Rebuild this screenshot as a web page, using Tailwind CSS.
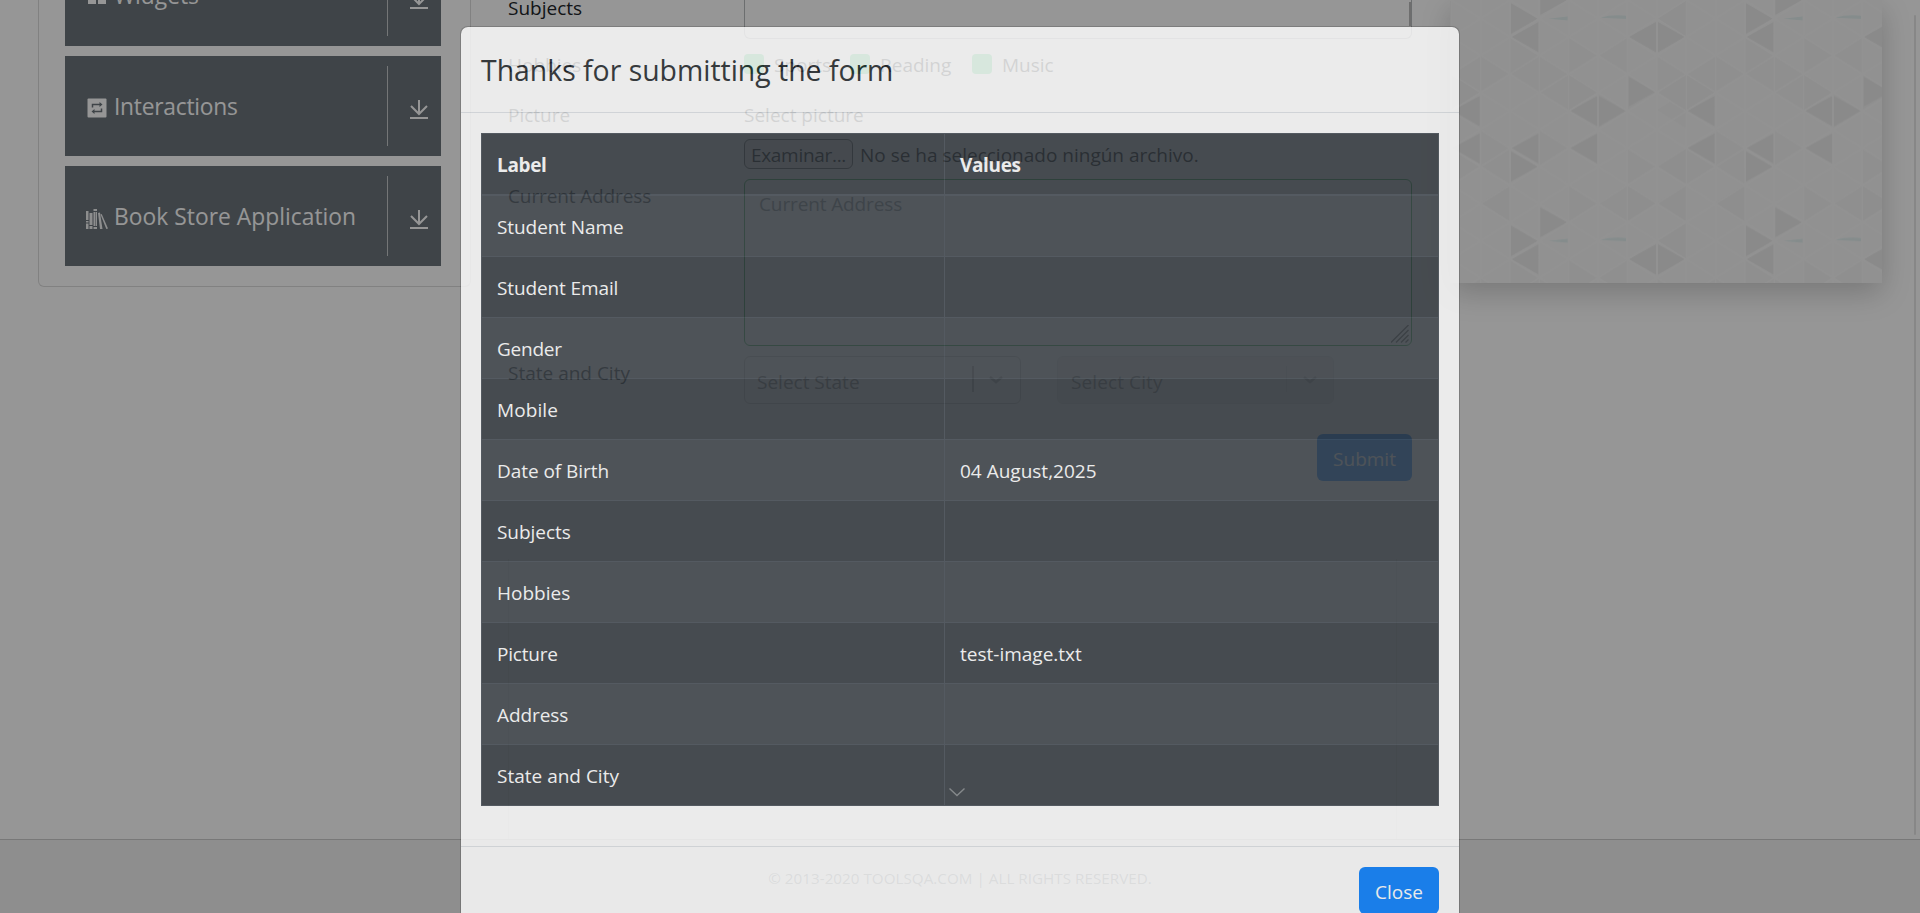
<!DOCTYPE html>
<html lang="en">
<head>
<meta charset="utf-8">
<title>Practice Form</title>
<script src="https://cdn.jsdelivr.net/npm/@tailwindcss/browser@4"></script>
</head>
<body class="bg-white">
<div class="relative h-[913px] w-full overflow-hidden bg-white font-['Open_Sans',sans-serif] text-[19px] leading-[30px] text-[#212529]">

  <div class="flex h-[839px] items-start">
    <!-- Side menu -->
    <nav class="ml-[38px] flex h-[287px] w-[433px] shrink-0 flex-col justify-end gap-2.5 rounded-b-md border-x border-b border-[#dcdcdc] pr-[29px] pl-[26px] pb-5 text-[22.8px] text-white">
      <div class="flex h-[100px] shrink-0 items-center bg-[#6b747b]">
        <svg class="ml-[22px] h-5 w-5 shrink-0" viewBox="0 0 20 20" fill="currentColor"><path d="M1 0h8v8H1zM11 0h8v8h-8zM1 10h8v8H1zM11 10h8v8h-8z"/></svg>
        <span class="ml-[7px] flex-1">Widgets</span>
        <div class="h-20 w-px bg-[#c6c9cb]"></div>
        <svg class="mr-[11px] ml-5 mt-[7px] h-[22px] w-[22px]" viewBox="0 0 22 22" fill="none" stroke="currentColor" stroke-width="2"><path d="M11 1v14M3 7l8 8 8-8M2 19h18"/></svg>
      </div>
      <div class="flex h-[100px] shrink-0 items-center bg-[#6b747b]">
        <svg class="ml-[22px] mt-1 h-5 w-5 shrink-0" viewBox="0 0 20 20"><rect x="0.500" y="0.500" width="19" height="19" rx="1" fill="#fff"/><path d="M5.500 9.500V6.500h7.500M14.500 10.500v3H7" fill="none" stroke="#6b747b" stroke-width="1.500"/><path d="M12.500 4l3 2.500-3 2.500zM7.500 11l-3 2.500 3 2.500z" fill="#6b747b"/></svg>
        <span class="mt-0.5 ml-[7px] flex-1 tracking-[-0.25px]">Interactions</span>
        <div class="h-20 w-px bg-[#c6c9cb]"></div>
        <svg class="mr-[11px] ml-5 mt-[7px] h-[22px] w-[22px]" viewBox="0 0 22 22" fill="none" stroke="currentColor" stroke-width="2"><path d="M11 1v14M3 7l8 8 8-8M2 19h18"/></svg>
      </div>
      <div class="flex h-[100px] shrink-0 items-center bg-[#6b747b]">
        <svg class="ml-[21px] mt-[5px] h-[21px] w-[22px] shrink-0" viewBox="0 0 22 21" fill="#f0f1f2"><path d="M0 3h2.500v9H0zM0 13h2.500v1.500H0zM0 15.500h2.500V21H0zM3.500 5h3v12h-3zM3.500 18h3v3h-3zM7.500 1h3.500v2H7.500zM7.500 4h2v14h-2zM10 4h1v14h-1zM7.500 19H11v2H7.500zM12 5l2-.5L16.500 21H14zM14.500 6.500l1.200-.4L22 20.500l-1.700.5z"/></svg>
        <span class="mt-0.5 ml-1.5 flex-1 tracking-[0.03px]">Book Store Application</span>
        <div class="h-20 w-px bg-[#c6c9cb]"></div>
        <svg class="mr-[11px] ml-5 mt-[7px] h-[22px] w-[22px]" viewBox="0 0 22 22" fill="none" stroke="currentColor" stroke-width="2"><path d="M11 1v14M3 7l8 8 8-8M2 19h18"/></svg>
      </div>
    </nav>

    <!-- Form -->
    <form class="ml-[37px] flex h-[839px] w-[904px] shrink-0 flex-col">
      <div class="flex h-[50px] shrink-0">
        <span class="-mt-[7px] w-[236px]">Subjects</span>
        <div class="flex h-[39px] w-[668px] justify-end rounded-b-md border-x border-b border-[#b8bbbd]"><div class="mt-0.5 h-6 w-0.5 bg-[#bbb]"></div></div>
      </div>
      <div class="flex h-[50px] shrink-0">
        <span class="w-[236px]">Hobbies</span>
        <div class="flex">
          <span class="mt-1 h-5 w-5 rounded bg-[#4ade80]"></span><span class="ml-2.5 w-[76px]">Sports</span>
          <span class="mt-1 h-5 w-5 rounded bg-[#4ade80]"></span><span class="ml-2.5 w-[92px]">Reading</span>
          <span class="mt-1 h-5 w-5 rounded bg-[#4ade80]"></span><span class="ml-2.5">Music</span>
        </div>
      </div>
      <div class="flex h-[79px] shrink-0">
        <span class="w-[236px]">Picture</span>
        <div>
          <div class="h-[39px]">Select picture</div>
          <div class="flex gap-[7px] text-black">
            <span class="h-[30px] w-[109px] rounded-md border border-[#555] bg-[#f4f4f4] text-center leading-[30px] tracking-[-0.3px]">Examinar...</span>
            <span class="leading-8">No se ha seleccionado ningún archivo.</span>
          </div>
        </div>
      </div>
      <div class="flex h-[177px] shrink-0">
        <span class="mt-0.5 w-[236px] tracking-[-0.12px]">Current Address</span>
        <div class="relative h-[167px] w-[668px] rounded-md border border-[#28a745] px-3.5 py-[9px] tracking-[-0.12px] text-[#6c757d]">Current Address
          <svg class="absolute right-0.5 bottom-0.5 h-[18px] w-[18px]" viewBox="0 0 18 18" stroke="#555" stroke-width="1.300"><path d="M0 17.500L17.500 0M5 17.500L17.500 5M10 17.500L17.500 10M14.500 17.500L17.500 14.500"/></svg>
        </div>
      </div>
      <div class="flex h-[78px] shrink-0">
        <span class="mt-0.5 w-[236px]">State and City</span>
        <div class="flex h-12 w-[277px] items-center rounded-md border border-[#ccc] pl-3 text-[#808080]">
          <span class="mt-1 flex-1">Select State</span>
          <div class="mb-0.5 h-[26px] w-0.5 bg-[#bbb]"></div>
          <svg class="mr-[17px] ml-[15px] h-2.5 w-[14px]" viewBox="0 0 14 10" fill="none" stroke="#bbb" stroke-width="2.500"><path d="M1 2l6 5 6-5"/></svg>
        </div>
        <div class="ml-9 flex h-12 w-[277px] items-center rounded-md border border-[#e6e6e6] bg-[#f2f2f2] pl-[13px] text-[#808080]">
          <span class="mt-1 flex-1 tracking-[0.1px]">Select City</span>
          <div class="mb-0.5 h-[26px] w-px bg-[#ddd]"></div>
          <svg class="mx-4 h-2.5 w-[14px]" viewBox="0 0 14 10" fill="none" stroke="#bbb" stroke-width="2.500"><path d="M1 2l6 5 6-5"/></svg>
        </div>
      </div>
      <div class="flex h-[47px] shrink-0 justify-end">
        <button type="button" class="w-[95px] rounded-md bg-[#007bff] pt-0.5 text-white">Submit</button>
      </div>
      <div class="mt-auto h-[280px] w-[889px] shrink-0 border-x border-[#ebebeb]"></div>
    </form>

    <!-- Side banner -->
    <aside class="ml-[38px] h-[283px] w-[432px] shrink-0 bg-[#f7f7f7] shadow-[0_10px_28px_rgba(0,0,0,0.2)]">
      <svg class="h-[283px] w-[432px]">
        <defs>
          <!-- Tile of eight triangle columns, in units of a third of a pixel -->
          <pattern id="tri" patternUnits="userSpaceOnUse" width="705" height="667" patternTransform="translate(60 0) scale(0.3333)">
            <g fill="#f4f4f4">
              <path d="M0 111v111l88-55zM88 164v111l88-55zM176 111v111l88-55zM352 222v111l88-55zM440 164v111l88-55zM616 164v111l88-55zM264 275v111l88-55zM88 386v111l88-55zM352 444v111l88-55zM528 444v111l88-55zM616 386v111l88-55zM176 555v111l88-55zM264 608L352 553v111zM440 330L528 275v111zM0 222L88 167v111zM88 275L176 220v111zM264 164L352 109v111zM528 222L616 167v111zM616 497L704 442v111z"/>
            </g>
            <g fill="#f1f1f1">
              <path d="M441 56L528 1v110zM176 220v110l88-55zM441 275L528 220v110zM528 220v110l88-55zM441 497L528 442v110zM616 608L704 553v110zM441 608L528 553v110zM352 553v110l88-55z"/>
            </g>
            <g fill="#ebebeb">
              <path d="M3 10v92l80-46zM5 111L86 66v91zM91 -45v90l80-45zM91 622v90l80-45zM357 111L438 66v91zM444 66v91l80-46zM356 230v90l80-45zM180 332L262 288v91zM267 288v91l80-46zM532 332L614 288v91zM5 444L86 400v91zM180 444L262 400v91zM532 444L614 400v91zM3 454v91l80-45z"/>
            </g>
            <g fill="#e2efef"><path d="M115 56l58-7v12zM270 53q35-10 78-6v10z"/></g>
            <g stroke="#f9f9f9" stroke-width="4" fill="none">
              <path d="M0 0v667M88 0v667M176 0v667M264 0v667M352 0v667M441 0v667M529 0v667M617 0v667M705 0v667"/>
              <path d="M0 0L705 445M0 111L705 556M0 222L705 667M0 333L529 667M0 444L353 667M0 556L176 667M176 0L705 333M353 0L705 222M529 0L705 111M705 0L0 445M705 111L0 556M705 222L0 667M705 333L176 667M705 444L353 667M705 556L529 667M529 0L0 333M353 0L0 222M176 0L0 111"/>
            </g>
          </pattern>
        </defs>
        <rect width="432" height="283" fill="url(#tri)"/>
      </svg>
    </aside>
    <div class="mt-[15px] ml-8 h-[820px] w-0.5 shrink-0 rounded bg-[#e6e6e6]"></div>
  </div>

  <!-- Page footer -->
  <footer class="h-[74px] border-t border-[#ccc] bg-[#f2f2f2] pt-[23px] text-center text-[15.2px] tracking-[0.03px] text-[#6c757d]">© 2013-2020 TOOLSQA.COM | ALL RIGHTS RESERVED.</footer>

  <!-- Backdrop -->
  <div class="absolute inset-0 bg-black/41"></div>

  <!-- Dialog -->
  <div role="dialog" class="absolute top-[26px] left-[460px] flex w-[1000px] flex-col rounded-lg border border-black/20 bg-white bg-clip-padding opacity-81">
    <div class="h-[86px] border-b border-[#dee2e6] px-5 pt-[21px] text-[28.4px] leading-[45px]">Thanks for submitting the form</div>
    <div class="h-[733px] px-5 pt-5">
      <table class="w-[958px] table-fixed border-collapse border border-[#454d55] bg-[#343a40] text-left text-white">
        <colgroup><col class="w-[463px]"><col></colgroup>
        <thead>
          <tr class="h-[61px] border-b-2 border-[#454d55] font-bold tracking-[-0.35px]"><th class="border-r border-[#454d55] px-[15px] pt-[3px]">Label</th><th class="px-[15px] pt-[3px]">Values</th></tr>
        </thead>
        <tbody class="[&>tr]:border-b [&>tr]:border-[#454d55] [&>tr:nth-child(odd)]:bg-white/5 [&_td]:px-[15px] [&_td]:pt-0.5 [&_td:first-child]:border-r [&_td:first-child]:border-[#454d55]">
          <tr class="h-[62px]"><td class="tracking-[-0.08px]">Student Name</td><td></td></tr>
          <tr class="h-[61px]"><td class="tracking-[-0.12px]">Student Email</td><td></td></tr>
          <tr class="h-[61px]"><td class="tracking-[-0.25px]">Gender</td><td></td></tr>
          <tr class="h-[61px]"><td class="tracking-[0.1px]">Mobile</td><td></td></tr>
          <tr class="h-[61px]"><td class="tracking-[-0.05px]">Date of Birth</td><td>04 August,2025</td></tr>
          <tr class="h-[61px]"><td class="tracking-[-0.05px]">Subjects</td><td></td></tr>
          <tr class="h-[61px]"><td>Hobbies</td><td></td></tr>
          <tr class="h-[61px]"><td class="tracking-[-0.2px]">Picture</td><td>test-image.txt</td></tr>
          <tr class="h-[61px]"><td class="tracking-[-0.1px]">Address</td><td></td></tr>
          <tr class="h-[61px]"><td>State and City</td><td></td></tr>
        </tbody>
      </table>
    </div>
    <div class="flex h-[90px] justify-end border-t border-[#dee2e6] px-5 pt-5">
      <button type="button" class="h-[47px] w-[80px] rounded-md bg-[#007bff] pt-0.5 text-white">Close</button>
    </div>
  </div>

  <!-- Banner collapse arrow -->
  <svg class="absolute top-[787px] left-[949px] h-[10px] w-4" viewBox="0 0 16 10" fill="none" stroke="#85898b" stroke-width="1.400"><path d="M.5 1.500L8 8.500l7.500-7"/></svg>
</div>
</body>
</html>
